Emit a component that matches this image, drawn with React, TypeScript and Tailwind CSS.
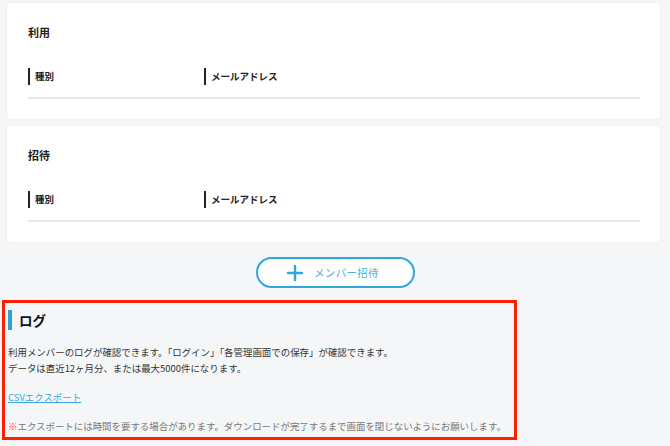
import { Plus } from 'lucide-react';

const jp = { fontFamily: '"Noto Sans CJK JP", "Noto Sans", sans-serif' };

function MemberCard({ title }: { title: string }) {
  return (
    <section className="rounded-[4px] bg-white px-[21px] pt-[21px] pb-[20px] shadow-[0_0_3px_rgba(0,0,0,0.06)]">
      <h2 className="text-[11px] font-bold leading-[16px] text-[#222]">{title}</h2>
      <div className="mr-[-1px] mt-[28px] flex border-b-2 border-[#e6e7e9] pb-[12px]">
        <div className="flex w-[176px] items-center border-l-2 border-[#222] pl-[5px] text-[9.5px] font-bold leading-[17px] text-[#222]">
          種別
        </div>
        <div className="flex items-center border-l-2 border-[#222] pl-[5px] text-[9.5px] font-bold leading-[17px] text-[#222]">
          メールアドレス
        </div>
      </div>
    </section>
  );
}

export default function App() {
  return (
    <div className="min-h-[446px] w-[670px] bg-[#f5f6f8] pt-[3px]" style={jp}>
      <div className="ml-[7px] mr-[10px] flex flex-col gap-[7px]">
        <MemberCard title="利用" />
        <MemberCard title="招待" />
      </div>

      <div className="mt-[15px] flex justify-center">
        <button className="flex h-[31px] w-[159px] items-center justify-center gap-[7px] rounded-full border-2 border-[#2ea7db] bg-white pr-[8px] text-[10.5px] text-[#4db3df]">
          <Plus className="h-[24px] w-[24px] text-[#2ea7db]" strokeWidth={2.4} />
          <span className="tracking-[0.03em]">メンバー招待</span>
        </button>
      </div>

      <div className="ml-[2px] mt-[12px] h-[140px] w-[515px] border-[3px] border-[#ff1e00] pl-[3px] pt-[7px]">
        <h2 className="flex h-[20px] items-center border-l-4 border-[#2aa5dc] pl-[7px] text-[13.5px] font-bold text-[#111]">
          ログ
        </h2>
        <p className="mt-[14px] text-[9.45px] leading-[16px] text-[#333]">
          利用メンバーのログが確認できます。「ログイン」「各管理画面での保存」が確認できます。
          <br />
          データは直近12ヶ月分、または最大5000件になります。
        </p>
        <a href="#" className="mt-[13px] inline-block text-[9.45px] leading-[16px] text-[#3aa9dc] underline">
          CSVエクスポート
        </a>
        <p className="mt-[12px] text-[9.45px] leading-[16px] text-[#777]">
          <span className="text-[#ff4a3a]">※</span>
          エクスポートには時間を要する場合があります。ダウンロードが完了するまで画面を閉じないようにお願いします。
        </p>
      </div>
    </div>
  );
}
